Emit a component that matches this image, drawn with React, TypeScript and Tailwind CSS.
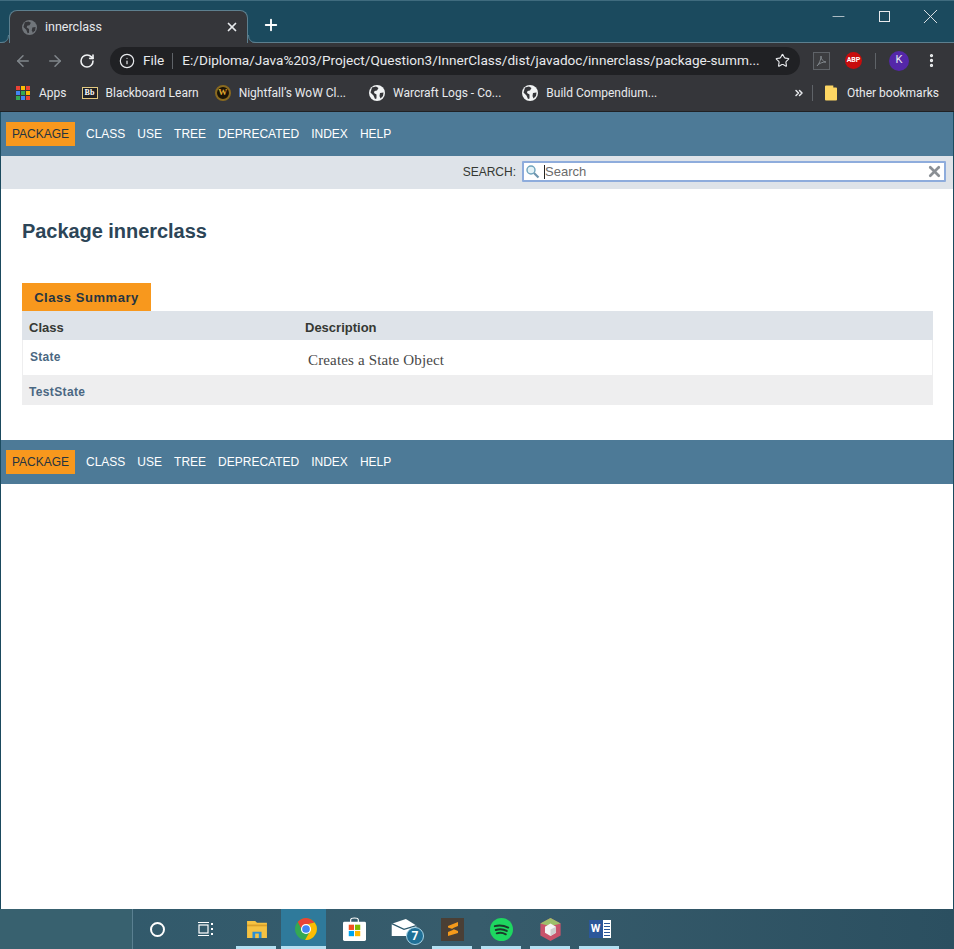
import type { FC, ReactNode } from "react";
import {
  ArrowLeft,
  ArrowRight,
  ChevronsRight,
  Info,
  Minus,
  MoreVertical,
  Plus,
  RotateCw,
  Star,
  X,
} from "lucide-react";

const uiFont = "font-['Roboto','Noto_Sans',sans-serif]";
const docFont = "font-['Liberation_Sans',Arial,sans-serif]";

const NAV_ITEMS = ["CLASS", "USE", "TREE", "DEPRECATED", "INDEX", "HELP"];

const GlobeIcon: FC<{ size?: number; color?: string; land?: string }> = ({
  size = 16,
  color = "#f1f3f4",
  land = "#35363a",
}) => (
  <svg width={size} height={size} viewBox="0 0 16 16" className="shrink-0">
    <circle cx="8" cy="8" r="8" fill={color} />
    <path
      d="M3 2.5 L7 1.5 L9.5 3 L8 5.5 L5.5 6 L5 8 L7.5 9.5 L7.5 13.5 L6 14 L4.5 10.5 L1.5 7.5 Z"
      fill={land}
    />
    <path d="M11 8 L14.5 7.5 L14 11 L11.5 13.5 L10.5 11 Z" fill={land} />
  </svg>
);

const AppsIcon = () => {
  const colors = [
    "#ea4335",
    "#fbbc04",
    "#ea4335",
    "#4285f4",
    "#34a853",
    "#fbbc04",
    "#34a853",
    "#4285f4",
    "#ea4335",
  ];
  return (
    <div className="grid h-[14px] w-[14px] grid-cols-3 gap-[1px]">
      {colors.map((c, i) => (
        <span key={i} className="block" style={{ backgroundColor: c }} />
      ))}
    </div>
  );
};

const Bookmark: FC<{ icon: ReactNode; label: string; className?: string }> = ({
  icon,
  label,
  className,
}) => (
  <div className={`flex items-center ${className ?? ""}`}>
    <span className="flex w-[16px] items-center justify-center">{icon}</span>
    <span className="ml-[8px] whitespace-nowrap text-[12px] text-[#e8eaed]">
      {label}
    </span>
  </div>
);

const ChromeFrame = () => (
  <div className={`${uiFont} shrink-0`}>
    <div className="relative flex h-[43px] items-end border-y border-b-[#5d7f8e] border-t-[#3f6b7e] bg-[#1b4a5e] pl-[9px]">
      <div className="relative mb-[-1px] flex h-[33px] w-[239px] items-center rounded-t-[8px] border-x border-t border-[#5d7f8e] bg-[#35363a] pl-[12px] pr-[8px]">
        {/* little flares where the tab meets the toolbar */}
        <svg width="8" height="8" viewBox="0 0 8 8" className="absolute bottom-0 left-[-9px]">
          <path d="M8 0 V8 H0 Q8 8 8 0 Z" fill="#35363a" />
          <path d="M0 7.5 Q7.5 7.5 7.5 0" fill="none" stroke="#5d7f8e" />
        </svg>
        <svg width="8" height="8" viewBox="0 0 8 8" className="absolute bottom-0 right-[-9px]">
          <path d="M0 0 V8 H8 Q0 8 0 0 Z" fill="#35363a" />
          <path d="M8 7.5 Q0.5 7.5 0.5 0" fill="none" stroke="#5d7f8e" />
        </svg>
        <GlobeIcon size={15} color="#70757a" land="#35363a" />
        <span className="ml-[8px] flex-1 text-[12.5px] text-[#e8eaed]">
          innerclass
        </span>
        <X size={14} strokeWidth={3} className="text-[#e8eaed]" />
      </div>
      <Plus
        size={18}
        strokeWidth={2.5}
        className="mb-[8px] ml-[14px] text-white"
      />
      <div className="absolute right-px top-0 flex h-[30px] items-center text-[#e8eaed]">
        <span className="flex w-[46px] justify-center">
          <Minus size={19} strokeWidth={0.9} />
        </span>
        <span className="flex w-[46px] justify-center">
          <span className="h-[11px] w-[11px] border border-[#e8eaed]" />
        </span>
        <span className="flex w-[46px] justify-center">
          <X size={25} strokeWidth={0.9} />
        </span>
      </div>
    </div>
    <div className="flex h-[35px] items-center bg-[#35363a] pl-[14px] pr-[14px]">
      <ArrowLeft size={18} strokeWidth={2} className="shrink-0 text-[#80868b]" />
      <ArrowRight size={18} strokeWidth={2} className="ml-[14px] shrink-0 text-[#80868b]" />
      <RotateCw size={16} strokeWidth={2.4} className="ml-[15px] shrink-0 text-[#f1f3f4]" />
      <div className="ml-[15px] flex h-[28px] w-[690px] shrink-0 items-center rounded-full bg-[#202124] pl-[9px] pr-[10px]">
        <Info size={16} strokeWidth={1.8} className="shrink-0 text-[#e8eaed]" />
        <span className="ml-[8px] text-[13.6px] text-[#e8eaed]">File</span>
        <span className="ml-[8px] h-[16px] w-px shrink-0 bg-[#5f6368]" />
        <span className="ml-[9px] min-w-0 flex-1 whitespace-nowrap text-[13.6px] text-[#e8eaed]">
          E:/Diploma/Java%203/Project/Question3/InnerClass/dist/javadoc/innerclass/package-summ...
        </span>
        <Star size={15} strokeWidth={1.8} className="shrink-0 text-[#e8eaed]" />
      </div>
      <div className="ml-[13px] flex h-[18px] w-[17px] shrink-0 items-center justify-center border border-[#5f6368] bg-[#3c3d40]">
        <svg width="11" height="12" viewBox="0 0 11 12">
          <path
            d="M1 11 C3 9 5 5 5 1 C5 4 7 7 10 7 C7 7 3 8 1 11 Z"
            fill="none"
            stroke="#80868b"
            strokeWidth="1"
          />
        </svg>
      </div>
      <div className="ml-[15px] flex h-[17px] w-[17px] shrink-0 items-center justify-center rounded-full bg-[#c70d0d] text-[7px] font-bold text-white">
        ABP
      </div>
      <span className="ml-[13px] h-[16px] w-px shrink-0 bg-[#5f6368]" />
      <div className="ml-[13px] flex h-[20px] w-[20px] shrink-0 items-center justify-center rounded-full bg-[#5427a8] text-[11px] text-[#e8eaed]">
        K
      </div>
      <MoreVertical size={17} strokeWidth={2.6} className="ml-[14px] shrink-0 text-[#f1f3f4]" />
    </div>
    <div className="flex h-[34px] items-center border-b border-[#202124] bg-[#35363a] pb-[4px] pl-[15px] pr-[15px]">
      <Bookmark icon={<AppsIcon />} label="Apps" />
      <Bookmark
        className="ml-[15px]"
        icon={
          <span className="flex h-[12px] w-[16px] items-center justify-center border border-[#e2c980] bg-[#202124] font-['Liberation_Serif',serif] text-[8px] font-bold text-white">
            Bb
          </span>
        }
        label="Blackboard Learn"
      />
      <Bookmark
        className="ml-[16px]"
        icon={
          <span className="flex h-[16px] w-[16px] items-center justify-center rounded-full border-2 border-[#8a6a1f] bg-[#1b1406] font-['Liberation_Serif',serif] text-[9px] font-bold text-[#e0a92e]">
            W
          </span>
        }
        label="Nightfall’s WoW Cl..."
      />
      <Bookmark className="ml-[23px]" icon={<GlobeIcon />} label="Warcraft Logs - Co..." />
      <Bookmark className="ml-[21px]" icon={<GlobeIcon />} label="Build Compendium..." />
      <ChevronsRight size={12} strokeWidth={3} className="ml-auto text-[#e8eaed]" />
      <span className="ml-[7px] h-[16px] w-px bg-[#5f6368]" />
      <svg width="12" height="16" viewBox="0 0 13 16" className="ml-[12px]">
        <path d="M0 1 Q0 0 1 0 H9 L9 2 H12 Q13 2 13 3 V15 Q13 16 12 16 H1 Q0 16 0 15 Z" fill="#fdd663" />
      </svg>
      <span className="ml-[10px] whitespace-nowrap text-[12px] text-[#e8eaed]">
        Other bookmarks
      </span>
    </div>
  </div>
);

const NavBar = () => (
  <div className="flex h-[44px] shrink-0 items-center bg-[#4d7a97] pl-[5px] text-[12px]">
    <span className="flex h-[24px] w-[69px] items-center justify-center bg-[#f8981d] text-[#253441]">
      PACKAGE
    </span>
    <div className="ml-[11px] flex gap-[12px] text-white">
      {NAV_ITEMS.map((item) => (
        <span key={item}>{item}</span>
      ))}
    </div>
  </div>
);

const SearchBar = () => (
  <div className="flex h-[33px] shrink-0 items-center justify-end bg-[#dee3e9] pb-[2px] pr-[7px] text-[12px] text-[#353833]">
    <span>SEARCH:</span>
    <div className="ml-[6px] flex h-[21px] w-[424px] items-center rounded-[1px] border-2 border-[#8eacdc] bg-white pl-[1px] pr-[1px]">
      <svg width="15" height="15" viewBox="0 0 15 15" className="shrink-0">
        <circle cx="6" cy="6" r="4" fill="#e4f2f6" stroke="#6fa4bd" strokeWidth="1.4" />
        <path d="M9 9 L13.5 13.5" stroke="#6f95ad" strokeWidth="2.2" />
      </svg>
      <span className="ml-[4px] h-[14px] w-px shrink-0 bg-[#222]" />
      <span className="flex-1 text-[13px] text-[#6b6b6b]">Search</span>
      <X size={17} strokeWidth={3.8} className="text-[#8a8f94]" />
    </div>
  </div>
);

const ClassTable = () => (
  <div className="ml-[21px] mr-[20px] mt-[40px]">
    <div className="flex h-[28px] w-[129px] items-center justify-center bg-[#f8981d] pt-px text-[13px] font-bold tracking-[0.55px] text-[#253441]">
      Class Summary
    </div>
    <div className="flex h-[29px] items-center bg-[#dee3e9] pl-[7px] pt-[4px] text-[13px] font-bold text-[#353833]">
      <span className="w-[276px]">Class</span>
      <span>Description</span>
    </div>
    <div className="flex h-[35px] border-x border-[#eeeeef] bg-white pl-[7px]">
      <span className="mt-[8px] w-[278px] text-[12px] font-bold tracking-[0.3px] text-[#4a6782]">
        State
      </span>
      <span className="mt-[9px] font-['Liberation_Serif',serif] text-[15px] tracking-[0.15px] text-[#474747]">
        Creates a State Object
      </span>
    </div>
    <div className="flex h-[30px] items-center bg-[#eeeeef] pl-[7px] pt-[4px] text-[12px] font-bold tracking-[0.35px] text-[#4a6782]">
      TestState
    </div>
  </div>
);

const TaskItem: FC<{ children: ReactNode; running?: boolean; active?: boolean }> = ({
  children,
  running,
  active,
}) => (
  <div className="relative flex h-full w-[49px] items-center justify-center">
    {active && <span className="absolute inset-y-0 left-0 w-[45px] bg-[#2f7a9b]" />}
    <span className="relative flex items-center justify-center">{children}</span>
    {running && (
      <span
        className={`absolute bottom-0 h-[3px] bg-[#b3e0f2] ${
          active ? "left-0 w-[45px]" : "left-[4px] w-[40px]"
        }`}
      />
    )}
  </div>
);

const Taskbar = () => (
  <div className="flex h-[40px] shrink-0 items-stretch bg-gradient-to-r from-[#30596b] via-[#375c6c] to-[#2b4f60]">
    <div className="w-[133px] border-r border-[#5a8091] bg-[#38616f]" />
    <div className="flex w-[48px] items-center justify-center">
      <span className="h-[15px] w-[15px] rounded-full border-2 border-white" />
    </div>
    <div className="mr-[2px] flex w-[49px] items-center justify-center">
      <svg width="18" height="16" viewBox="0 0 18 16" fill="none" stroke="#fff" strokeWidth="1.2">
        <path d="M1 1.5 H12 M1 14.5 H12" />
        <rect x="2" y="4" width="9" height="8" />
        <path d="M15 2 V4 M15 7 V9 M15 12 V14" strokeWidth="2" />
      </svg>
    </div>
    <TaskItem running>
      <svg width="22" height="19" viewBox="0 0 24 21">
        <path d="M1 1 H10 L12 3 H23 V20 H1 Z" fill="#f5c242" />
        <path d="M1 5 H23 V7 H1 Z" fill="#d9a02a" />
        <rect x="7" y="13" width="10" height="7" fill="#2b8fd6" />
        <rect x="10" y="15" width="4" height="5" fill="#f5c242" />
      </svg>
    </TaskItem>
    <TaskItem running active>
      <svg width="22" height="22" viewBox="0 0 24 24">
        <circle cx="12" cy="12" r="12" fill="#34a853" />
        <path d="M21.5 5 A12 12 0 0 0 3 4 L8 14 L12 7 Z" fill="#ea4335" />
        <path d="M21.5 5 A12 12 0 0 1 11 24 L16.3 14.5 L12 7 Z" fill="#fbbc04" />
        <circle cx="12" cy="12" r="5.5" fill="#fff" />
        <circle cx="12" cy="12" r="4.2" fill="#4285f4" />
      </svg>
    </TaskItem>
    <TaskItem>
      <svg width="23" height="24" viewBox="0 0 24 25">
        <path d="M8 6 V3 Q8 1 12 1 Q16 1 16 3 V6" fill="none" stroke="#fff" strokeWidth="1.2" />
        <rect x="0" y="5" width="24" height="20" rx="1.5" fill="#fff" />
        <rect x="6" y="8" width="5.5" height="5.5" fill="#f25022" />
        <rect x="12.5" y="8" width="5.5" height="5.5" fill="#7fba00" />
        <rect x="6" y="14.5" width="5.5" height="5.5" fill="#00a4ef" />
        <rect x="12.5" y="14.5" width="5.5" height="5.5" fill="#ffb900" />
      </svg>
    </TaskItem>
    <TaskItem>
      <div className="relative ml-[8px] h-[24px] w-[33px]">
        <svg width="26" height="17" viewBox="0 0 26 18" className="absolute left-0 top-[2px]">
          <path d="M0 5 L15 0 L26 7 V18 H0 Z" fill="#fff" />
          <path d="M0 5 L13 11 L26 7" fill="none" stroke="#2b586c" strokeWidth="1.4" />
        </svg>
        <span className="absolute bottom-[-4px] right-0 flex h-[18px] w-[18px] items-center justify-center rounded-full border border-[#a8d5e8] bg-[#1f6f96] text-[12px] font-bold text-white">
          7
        </span>
      </div>
    </TaskItem>
    <TaskItem running>
      <div className="flex h-[23px] w-[23px] items-center justify-center bg-[#4a3f35]">
        <svg width="12" height="16" viewBox="0 0 12 16">
          <path d="M1 5 L11 1 V5 L5 7.5 L11 10 V12 L1 15 V11 L7 8.5 L1 6.5 Z" fill="#f59a1b" />
        </svg>
      </div>
    </TaskItem>
    <TaskItem running>
      <svg width="23" height="23" viewBox="0 0 24 24">
        <circle cx="12" cy="12" r="12" fill="#1ed760" />
        <path d="M5 8.5 Q12 6.5 19 10 M6 12.5 Q12 10.5 17.5 13.5 M7 16 Q12 14.5 16.5 17" fill="none" stroke="#1b3a2a" strokeWidth="2" strokeLinecap="round" />
      </svg>
    </TaskItem>
    <TaskItem running>
      <svg width="21" height="23" viewBox="0 0 22 25">
        <path d="M11 0 L22 6 V19 L11 25 L0 19 V6 Z" fill="#c9536b" />
        <path d="M11 0 L22 6 L11 9 L0 6 Z" fill="#9dbf6a" />
        <path d="M11 6 L17 9.5 V16 L11 19.5 L5 16 V9.5 Z" fill="#f5f5f5" />
        <path d="M11 12.5 L17 9.5 V16 L11 19.5 Z" fill="#cfcfcf" />
      </svg>
    </TaskItem>
    <TaskItem running>
      <div className="flex h-[18px] w-[22px]">
        <div className="flex h-full w-[14px] items-center justify-center bg-[#2b579a] text-[11px] font-bold text-white">
          W
        </div>
        <div className="flex h-full w-[8px] flex-col justify-center gap-[2px] bg-white px-[1px]">
          <span className="h-px bg-[#2b579a]" />
          <span className="h-px bg-[#2b579a]" />
          <span className="h-px bg-[#2b579a]" />
          <span className="h-px bg-[#2b579a]" />
          <span className="h-px bg-[#2b579a]" />
        </div>
      </div>
    </TaskItem>
  </div>
);

export default function App() {
  return (
    <div className="flex h-[949px] w-[954px] flex-col overflow-hidden bg-[#1b4a5e]">
      <ChromeFrame />
      <div className={`${docFont} mx-px flex flex-1 flex-col bg-white`}>
        <NavBar />
        <SearchBar />
        <h1 className="ml-[21px] mt-[30px] text-[20px] font-bold leading-[24px] tracking-[-0.05px] text-[#2c4557]">
          Package innerclass
        </h1>
        <ClassTable />
        <div className="mt-[35px]">
          <NavBar />
        </div>
      </div>
      <div className={uiFont}>
        <Taskbar />
      </div>
    </div>
  );
}
